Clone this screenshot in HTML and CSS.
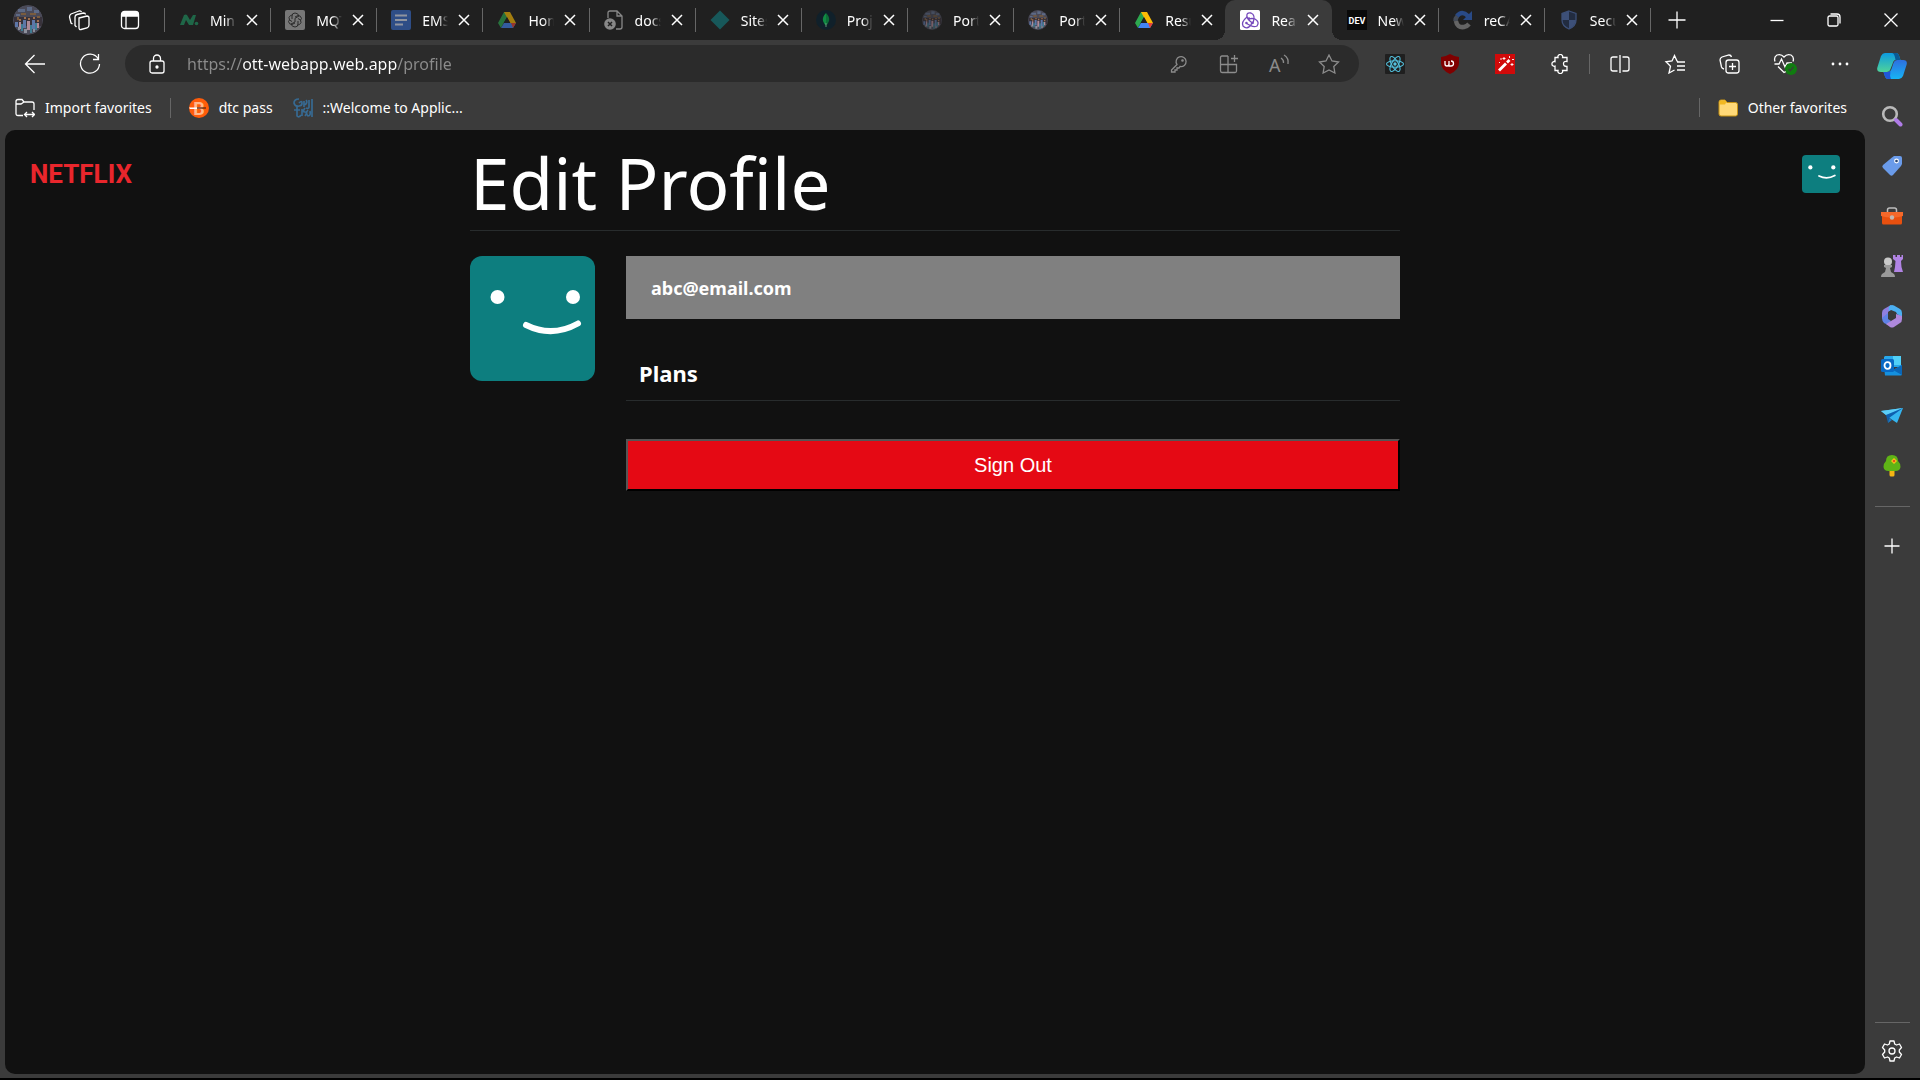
FILE: index.html
```html
<!DOCTYPE html>
<html lang="en">
<head>
  <meta charset="UTF-8">
  <meta name="viewport" content="width=device-width, initial-scale=1.0">
  <title>Edit Profile</title>
  <link rel="stylesheet" href="styles.css">
</head>
<body>
  <!-- Shared icons -->
  <svg class="sprite" aria-hidden="true">
    <symbol id="x" viewBox="0 0 12 12"><path d="M1 1l10 10M11 1L1 11" fill="none" stroke="#fff" stroke-width="1.500"/></symbol>
    <symbol id="drive" viewBox="0 0 20 20">
      <path fill="#2da84f" d="M7 2h6L5 16l-1 2-3-5z"/>
      <path fill="#fbbc05" d="M7 2h6l6 11h-6z"/>
      <path fill="#4285f4" d="M4 18l3-5h12l-3 5z"/>
      <path fill="#ea4335" d="M14 13h5l-3 5z"/>
      <path fill="#202020" d="M10 7l3.400 6H6.600z"/>
    </symbol>
    <symbol id="crowd" viewBox="0 0 30 30">
      <circle cx="15" cy="15" r="15" fill="#4a4a58"/>
      <path fill="#38323a" d="M1 12h28v9H1z"/>
      <path fill="#5d6a86" d="M5 4h7v3H5zM14 2h5v4h-5zM21 5h5v3h-5zM3 9h4v2H3z"/>
      <path fill="#7a5c3e" d="M8 8h5v2H8zM17 8h6v2h-6zM4 12h2v3H4zM24 11h3v2h-3z"/>
      <path fill="#a0704c" d="M6 14h2v2H6zM11 12h2v2h-2zM15 13h2v2h-2zM20 12h2v2h-2zM24 15h2v2h-2z"/>
      <path fill="#5d77a8" d="M2 17h3v5H2zM10 15h3v8h-3zM19 15h3v9h-3z"/>
      <path fill="#b08a98" d="M6 17h2v7H6zM14 16h3v9h-3zM24 18h2v5h-2z"/>
      <path fill="#3f7c92" d="M8 19h2v7H8zM17 20h2v8h-2zM22 18h2v7h-2z"/>
      <path fill="#8c8f9b" d="M11 24h3v4h-3zM5 22h2v3H5zM20 24h2v3h-2z"/>
    </symbol>
    <symbol id="face" viewBox="0 0 125 125">
      <path fill="#0d7e7f" d="M0 0h125v125H0z"/>
      <circle cx="27.500" cy="41" r="7" fill="#fff"/>
      <circle cx="103" cy="41" r="7" fill="#fff"/>
      <path d="M56 69q26 13 52-1.500" fill="none" stroke="#fff" stroke-width="6" stroke-linecap="round"/>
    </symbol>
  </svg>

  <!-- Tab strip -->
  <header class="titlebar">
    <div class="titlebar-start">
      <button class="icon-btn profile" type="button" aria-label="Profile"><svg width="30" height="30"><use href="#crowd"/></svg></button>
      <button class="icon-btn" type="button" aria-label="Workspaces">
        <svg class="line" width="22" height="22" viewBox="0 0 22 22"><path d="M11 9l8-2q2 0 2 2v7q0 2-2 3l-6 1.500q-2 .5-2-2z"/><path d="M8.500 18L7 16.500V8q0-2 2-2.500L15.500 4q2 0 2 1.500M4.500 15L3 14l-1.500-6q0-2 1.500-3l8-3q2-.5 2.500 1"/></svg>
      </button>
      <button class="icon-btn" type="button" aria-label="Tab actions">
        <svg class="line" width="20" height="20" viewBox="0 0 20 20"><rect x="1.500" y="1.500" width="17" height="17" rx="3"/><path d="M6 6v12"/><path d="M2 4q0-2 2-2h12q2 0 2 2v2H2z" fill="#fff"/></svg>
      </button>
    </div>
    <nav class="tabs" aria-label="Tabs">
      <div class="tab">
        <svg width="20" height="20" viewBox="0 0 20 20"><path d="M1 15L5 5q2-1 3 0l3 5 3-5h3l-3 10h-4L7 10l-2 5z" fill="#1f6748"/><circle cx="17.500" cy="13.500" r="1.800" fill="#1f6748"/></svg>
        <a href="#">Mini</a><button type="button" aria-label="Close Min"><svg width="12" height="12"><use href="#x"/></svg></button>
      </div>
      <div class="tab">
        <svg width="20" height="20" viewBox="0 0 20 20"><rect width="20" height="20" rx="2" fill="#777"/><g fill="none" stroke="#2b2b2b"><path d="M7 9V6q0-3 3-3t4 3l-4 2.300v3.700M7 11.500L4.500 10Q3 7 5.500 5.500L7 5M10 13l-3 1.500q-3 0-3.500-3l1-1.500M13 11v3q0 3-3 3t-4-3l4-2M13 8.500l2.500 1.500q1.500 3-1 4.500l-1.500.5M10 7l3-1.500q3 0 3.500 3l-1 1.500"/></g></svg>
        <a href="#">MQT</a><button type="button" aria-label="Close MQ"><svg width="12" height="12"><use href="#x"/></svg></button>
      </div>
      <div class="tab">
        <svg width="20" height="20" viewBox="0 0 20 20"><rect width="20" height="20" rx="2" fill="#2e4d86"/><path d="M4 5.500h12M4 10h12M4 14.500h8" stroke="#8f949f" stroke-width="2"/></svg>
        <a href="#">EMS</a><button type="button" aria-label="Close EMS"><svg width="12" height="12"><use href="#x"/></svg></button>
      </div>
      <div class="tab dim">
        <svg width="20" height="20"><use href="#drive"/></svg>
        <a href="#">Home</a><button type="button" aria-label="Close Home"><svg width="12" height="12"><use href="#x"/></svg></button>
      </div>
      <div class="tab">
        <svg width="20" height="20" viewBox="0 0 20 20"><path d="M4 8V3q0-2 2-2h7l5 5v11q0 2-2 2h-4M13 1v5h5" fill="none" stroke="#888" stroke-width="1.300"/><circle cx="6" cy="14" r="5.800" fill="#888"/><path d="M4 12l4 4M8 12l-4 4" stroke="#202020" stroke-width="1.500"/></svg>
        <a href="#">docs</a><button type="button" aria-label="Close docs"><svg width="12" height="12"><use href="#x"/></svg></button>
      </div>
      <div class="tab">
        <svg width="20" height="20" viewBox="0 0 20 20"><path d="M10 .5l9.500 9.500-9.500 9.500L.5 10z" fill="#17585a"/></svg>
        <a href="#">Sites</a><button type="button" aria-label="Close Sites"><svg width="12" height="12"><use href="#x"/></svg></button>
      </div>
      <div class="tab">
        <svg width="20" height="20" viewBox="0 0 20 20"><circle cx="10" cy="10" r="10" fill="#10202a"/><path d="M10 3q-4 4-3 8 1 3 3 4.500z" fill="#118a43"/><path d="M10 3q4 4 3 8-1 3-3 4.500z" fill="#0d6e38"/><path d="M10 13v4" stroke="#7a8" stroke-width=".8"/></svg>
        <a href="#">Proje</a><button type="button" aria-label="Close Project"><svg width="12" height="12"><use href="#x"/></svg></button>
      </div>
      <div class="tab dim">
        <svg width="20" height="20"><use href="#crowd"/></svg>
        <a href="#">Portf</a><button type="button" aria-label="Close Port"><svg width="12" height="12"><use href="#x"/></svg></button>
      </div>
      <div class="tab">
        <svg width="20" height="20"><use href="#crowd"/></svg>
        <a href="#">Portf</a><button type="button" aria-label="Close Port"><svg width="12" height="12"><use href="#x"/></svg></button>
      </div>
      <div class="tab">
        <svg width="20" height="20"><use href="#drive"/></svg>
        <a href="#">Resu</a><button type="button" aria-label="Close Resume"><svg width="12" height="12"><use href="#x"/></svg></button>
      </div>
      <div class="tab active">
        <svg width="20" height="20" viewBox="0 0 20 20"><rect width="20" height="20" rx="1.500" fill="#fff"/><g fill="none" stroke="#764abc" stroke-width="1.300" stroke-linecap="round"><path d="M13 13q3-8-2-10-5-1-4 4 1 3 4 5"/><path d="M7 7q-6 5-4 9 4 4 8-1l1-3" /><path d="M6 13q7 5 11 3 3-4-2-7-3-1-6 0"/></g><g fill="#764abc"><circle cx="12.500" cy="13" r="1.200"/><circle cx="9" cy="8.500" r="1.200"/><circle cx="6.500" cy="13" r="1.200"/></g></svg>
        <a href="#">Reac</a><button type="button" aria-label="Close React"><svg width="12" height="12"><use href="#x"/></svg></button>
      </div>
      <div class="tab after-active">
        <svg width="20" height="20" viewBox="0 0 20 20"><path d="M0 0h20v20H0z" fill="#090909"/><text x="10" y="14" class="dev">DEV</text></svg>
        <a href="#">New</a><button type="button" aria-label="Close New"><svg width="12" height="12"><use href="#x"/></svg></button>
      </div>
      <div class="tab">
        <svg width="20" height="20" viewBox="0 0 20 20"><g fill="none" stroke-width="4.500"><path d="M2.500 11a7 7 0 0 1 2-5" stroke="#444b57"/><path d="M4 6q5-6 11 0" stroke="#294a86"/><path d="M3 11q1 7 8 6 3-.5 5-3" stroke="#656565"/></g><path d="M19 1v9h-9z" fill="#294a86"/></svg>
        <a href="#">reCA</a><button type="button" aria-label="Close reCAPTCHA"><svg width="12" height="12"><use href="#x"/></svg></button>
      </div>
      <div class="tab">
        <svg width="20" height="20" viewBox="0 0 20 20"><path d="M10 1l7 2.500V10q0 6-7 9-7-3-7-9V3.500z" fill="#222c40" stroke="#3d5078" stroke-width="1.300"/><path d="M10 1v9H3V3.500zM10 10h7q-1 6-7 9z" fill="#3d5078"/></svg>
        <a href="#">Secu</a><button type="button" aria-label="Close Security"><svg width="12" height="12"><use href="#x"/></svg></button>
      </div>
    </nav>
    <div class="titlebar-end">
      <button class="icon-btn" type="button" aria-label="New tab"><svg class="line" width="18" height="18" viewBox="0 0 18 18"><path d="M9 .5v17M.5 9h17"/></svg></button>
      <div class="window-controls">
        <button class="icon-btn" type="button" aria-label="Minimize"><svg class="line" width="14" height="14" viewBox="0 0 14 14"><path d="M.5 7.500h13"/></svg></button>
        <button class="icon-btn" type="button" aria-label="Restore"><svg class="line" width="14" height="14" viewBox="0 0 14 14"><rect x="1" y="3" width="10" height="10" rx="1.500"/><path d="M3.500 1H10q3 0 3 3v6.500"/></svg></button>
        <button class="icon-btn" type="button" aria-label="Close"><svg class="line" width="14" height="14" viewBox="0 0 14 14"><path d="M.5.5l13 13M13.500.5l-13 13"/></svg></button>
      </div>
    </div>
  </header>

  <div class="browser">
    <div class="left">
      <!-- Address bar -->
      <div class="toolbar">
        <button class="tool" type="button" aria-label="Back"><svg class="line" width="22" height="20" viewBox="0 0 22 20"><path d="M10.500 1L1.500 10l9 9M1.500 10H21"/></svg></button>
        <button class="tool" type="button" aria-label="Refresh"><svg class="line" width="22" height="22" viewBox="0 0 22 22"><path d="M19 5.500A9.500 9.500 0 1 0 20.500 11M19.500 1v5.500H14"/></svg></button>
        <form class="address">
          <svg class="line" width="18" height="20" viewBox="0 0 18 20"><rect x="2" y="7" width="14" height="12" rx="2"/><path d="M5.500 7V4.500a3.500 3.500 0 0 1 7 0V7"/><circle cx="9" cy="13" r="1" fill="#fff"/></svg>
          <input type="text" aria-label="Address" value="https://ott-webapp.web.app/profile">
          <button type="button" aria-label="Passwords"><svg class="line gray" width="18" height="18" viewBox="0 0 18 18"><path d="M7 9.500L1.500 15v2H5v-2h2v-2h2l1-1.500a5 5 0 1 0-3-2z"/><circle cx="12.500" cy="5.500" r=".7"/></svg></button>
          <button type="button" aria-label="Apps"><svg class="line gray" width="20" height="20" viewBox="0 0 20 20"><path d="M9 2H3q-1.500 0-1.500 1.500v13Q1.500 18.500 3 18.500h13q1.500 0 1.500-1.500v-6.500h-16M9 2v16.500M15.500 1v7M12 4.500h7"/></svg></button>
          <button type="button" aria-label="Read aloud"><svg class="line gray" width="22" height="20" viewBox="0 0 22 20"><path d="M13 4q3 2 2.500 5M16 1q5 3 4 9"/><text x="1" y="18" class="read">A</text></svg></button>
          <button type="button" aria-label="Add to favorites"><svg class="line gray" width="22" height="20" viewBox="0 0 22 20"><path d="M11 1l3 6 6.500 1-4.700 4.600 1.100 6.400L11 16l-5.900 3 1.100-6.400L1.500 8 8 7z"/></svg></button>
        </form>
        <button class="tool" type="button" aria-label="React tools"><svg width="20" height="20" viewBox="0 0 20 20"><rect width="20" height="20" rx="1" fill="#1f1f1f"/><g fill="none" stroke="#53c1de" stroke-width="1.100"><ellipse cx="10" cy="10" rx="8.500" ry="3.300"/><ellipse cx="10" cy="10" rx="8.500" ry="3.300" transform="rotate(60 10 10)"/><ellipse cx="10" cy="10" rx="8.500" ry="3.300" transform="rotate(120 10 10)"/></g><circle cx="10" cy="10" r="1.700" fill="#53c1de"/></svg></button>
        <button class="tool" type="button" aria-label="Ad blocker"><svg width="20" height="20" viewBox="0 0 20 20"><path d="M10 0q4 2.500 9 3v6q0 7-9 11Q1 16 1 9V3q5-.5 9-3z" fill="#800000"/><path d="M5 7v3q0 2 2 2t2-2V7v5h2a2.500 2.500 0 1 0 0-5" fill="none" stroke="#fff" stroke-width="1.300"/></svg></button>
        <button class="tool" type="button" aria-label="Magic wand"><svg width="20" height="20" viewBox="0 0 20 20"><path d="M0 0h20v20H0z" fill="#d10a0a"/><path d="M4 16.500l7-7" stroke="#fff" stroke-width="2.800"/><path d="M12 8.500l2.500-2.500" stroke="#fff" stroke-width="2.600"/><path d="M9 3v3M7.500 4.500h3M17 9v3M15.500 10.500h3M14.500 2v2M5 5h2M17 5.500h2M4 8.500h1" stroke="#fff" stroke-width=".9"/></svg></button>
        <button class="tool" type="button" aria-label="Extensions"><svg class="line" width="20" height="20" viewBox="0 0 20 20"><path d="M5 3.500h3a2.400 2.400 0 1 1 4.600 0H17V7.500q-3.500-.5-3.500 2.300t3.500 2.700V16.500h-4.400a2.400 2.400 0 1 1-4.600 0H5v-4.300a2.400 2.400 0 1 1 0-4.600z"/></svg></button>
        <span class="bar"></span>
        <button class="tool" type="button" aria-label="Split screen"><svg class="line" width="20" height="20" viewBox="0 0 20 20"><path d="M10 1v18M7.500 3H3Q1 3 1 5v10q0 2 2 2h4.500M12.500 3H17q2 0 2 2v10q0 2-2 2h-4.500"/></svg></button>
        <button class="tool" type="button" aria-label="Favorites"><svg class="line" width="22" height="20" viewBox="0 0 22 20"><path d="M14 7.500l-1-.5-2.500-5.500L8 7l-6 .8 4.500 4.400L5 19l5.500-3M13 8h8M13 12h8M13 16h8"/></svg></button>
        <button class="tool" type="button" aria-label="Collections"><svg class="line" width="22" height="20" viewBox="0 0 22 20"><rect x="7" y="6" width="13" height="13" rx="2.500"/><path d="M13.500 9v7M10 12.500h7M5 15q-2-.5-2.500-2L1 6q0-2 2-3l7-2q2 0 2.500 2"/></svg></button>
        <button class="tool" type="button" aria-label="Browser essentials"><svg class="line" width="24" height="22" viewBox="0 0 24 22"><path d="M2 8.500Q.5 4 4 2q4-1.500 7 2 3-3.500 7-2 3.500 2 2 6.500M1.500 11H6l2.500-5 3.500 8 2-4h5M5 13.500l6 6 2-1"/><circle cx="18" cy="16" r="6" fill="#107c10" stroke="none"/><path d="M15.500 16l1.700 1.800 3.300-4" stroke="#3b3b3b"/></svg></button>
        <button class="tool" type="button" aria-label="Settings and more"><svg width="18" height="4" viewBox="0 0 18 4" fill="#fff"><circle cx="2" cy="2" r="1.400"/><circle cx="9" cy="2" r="1.400"/><circle cx="16" cy="2" r="1.400"/></svg></button>
      </div>

      <!-- Favorites bar -->
      <nav class="favorites" aria-label="Favorites">
        <a href="#"><svg class="line" width="20" height="20" viewBox="0 0 20 20"><path d="M8 17.500H3q-2 0-2-2v-12Q1 1.500 3 1.500h4l2 2.500h8q2 0 2 2V12M1 6h5l3-2M10 16.500h9M12 14l-2.500 2.500L12 19M17 14l2.500 2.500L17 19"/></svg>Import favorites</a>
        <span class="bar"></span>
        <a href="#"><svg width="20" height="20" viewBox="0 0 20 20"><circle cx="10" cy="10" r="10" fill="#ff5c0a"/><text x="10" y="17" class="dtc">B</text><path d="M0 9.500h8v1.500H1z" fill="#fff"/><path d="M8 10h9" stroke="#5a2a18" stroke-width="1.300"/></svg>dtc pass</a>
        <a href="#"><svg width="20" height="20" viewBox="0 0 20 20" fill="none" stroke="#376a92" stroke-width="1.700"><path d="M6 1Q1 1 1 5q1 4 5 3M6 5q3-3 3 0t-3 3M11 3v6M12 7q3-3 1-5M16 2v7q0 2-3 1M19 1v8M1 12h6M4 9v9q2 2 4-1M9 11v7M12 10q-3 4 0 4 3 0 0 4M15 12q-3 3 0 6 3 0 2-5M19 9v10"/></svg>::Welcome to Applic...</a>
        <a class="other" href="#"><svg width="20" height="18" viewBox="0 0 20 18"><path d="M1 3q0-2 2-2h4l2 2.500h8.500q2 0 2 2V15q0 2-2 2H3q-2 0-2-2z" fill="#ffd978" stroke="#c69212"/><path d="M1.500 5.500V3q0-1.500 1.500-1.500h4L8.500 3 7 5.500z" fill="#f2b821"/></svg>Other favorites</a>
      </nav>

      <!-- Profile page -->
      <main class="page">
        <div class="nav">
          <a class="logo" href="#">NETFLIX</a>
          <a href="#" aria-label="Profile"><svg class="nav-avatar" width="38" height="38"><use href="#face"/></svg></a>
        </div>
        <div class="profile-body">
          <h1>Edit Profile</h1>
          <div class="profile-info">
            <svg class="avatar" width="125" height="125"><use href="#face"/></svg>
            <div class="details">
              <h2>abc@email.com</h2>
              <h3>Plans</h3>
              <button class="sign-out" type="button">Sign Out</button>
            </div>
          </div>
        </div>
      </main>
    </div>

    <!-- Sidebar -->
    <aside class="sidebar">
      <button type="button" aria-label="Copilot"><svg width="30" height="28" viewBox="0 0 30 28">
        <defs>
          <linearGradient id="cp1" x2="0" y2="1"><stop stop-color="#0c9be0"/><stop offset="1" stop-color="#4fd39a"/></linearGradient>
          <linearGradient id="cp2" x2="0" y2="1"><stop stop-color="#2e6fe0"/><stop offset="1" stop-color="#16b4f5"/></linearGradient>
        </defs>
        <path d="M8 1h11q2.500 0 3.500 4l1 3h-5q-2 0-3 4l-2 5q-1 3-4 3H4q-5 0-3.500-5L4 4q1.500-3 4-3z" fill="url(#cp1)"/><path d="M15 1h4q2.500 0 3.500 4l1 3h-5q-1-7-3.500-7z" fill="#0a5a94"/>
        <path d="M22 27H11q-2.500 0-3.500-4l-1-3h4q3 0 4-3l2-6q1-3 4-3H26q5 0 3.500 5L26 24q-1.500 3-4 3z" fill="url(#cp2)"/><path d="M14 27h-3q-2.500 0-3.500-4l-1-3h4q2 0 3-1-1 5 .5 8z" fill="#2058d8"/>
      </svg></button>
      <button type="button" aria-label="Search"><svg width="22" height="22" viewBox="0 0 22 22" fill="none"><circle cx="9" cy="9" r="6.800" stroke="#b9b9b9" stroke-width="2.600"/><path d="M15 15l4.500 4.500" stroke="#b07ce8" stroke-width="4" stroke-linecap="round"/></svg></button>
      <button type="button" aria-label="Shopping"><svg width="22" height="22" viewBox="0 0 22 22"><path d="M11 2.500L13 1h6q2 0 2 2v6l-1 2-8 9q-1.500 1.500-3 0l-7-7q-1.500-1.500 0-3z" fill="#6a9bea"/><circle cx="15.500" cy="6" r="2.400" fill="#fff"/><circle cx="15.500" cy="6" r="1.300" fill="#26426f"/></svg></button>
      <button type="button" aria-label="Tools"><svg width="22" height="18" viewBox="0 0 22 18"><path d="M6.500 5V3q0-2 2-2h5q2 0 2 2v2" fill="none" stroke="#bdbdbd" stroke-width="1.500"/><path d="M1 9h20v7q0 1.500-1.500 1.500h-17Q1 17.500 1 16z" fill="#e8500f"/><path d="M0 5h22v4q-5 1.500-11 1.500T0 9z" fill="#f4682a"/><circle cx="11" cy="10.500" r="2.200" fill="#c2b8b2"/></svg></button>
      <button type="button" aria-label="Games"><svg width="22" height="24" viewBox="0 0 22 24"><path d="M12 1h2.500v2H16V1h3v2h1.500V1H22v4l-2 2 .5 6L22 18h-9l1-5 .5-6-2.500-2z" fill="#b184e4"/><circle cx="7" cy="7.500" r="4" fill="#c8c8c8"/><path d="M3 11h8v2l-2 1 1 4 3 2q1 1 1 3H0q0-2 1-3l3-2 1-4-2-1z" fill="#999"/></svg></button>
      <button type="button" aria-label="Microsoft 365"><svg width="22" height="24" viewBox="0 0 22 24"><path d="M10 1L3 5Q1 6 1 9v6l6-3V8l4-3z" fill="#8f7fe0"/><path d="M9 1.500q2-1 4 0l6 3.500q2 1 2 4v4l-5-3-1-2-5-2-2 1q-1-4 1-5.500z" fill="#4bb0f2"/><path d="M1 14l6-5v6l3 2-3 4-4-2q-2-2-2-5z" fill="#5f82e6"/><path d="M21 12v3q0 3-2 4l-6 4q-2 1-4 0l-4-3 5-3 5-3v-4z" fill="#ae88dc"/></svg></button>
      <button type="button" aria-label="Outlook"><svg width="22" height="22" viewBox="0 0 22 22"><path d="M4 1h15q1 0 1 1v10H3V2z" fill="#28a8ea"/><path d="M12 1h8v9h-8z" fill="#50d0f8"/><path d="M3 12l9 3 9-5v9q0 1.500-1.500 1.500H4z" fill="#1490df"/><path d="M12 15l9 5V10z" fill="#0a66b7"/><rect x="0" y="4" width="13" height="13" rx="1.500" fill="#0869c4"/><ellipse cx="6.500" cy="10.500" rx="3" ry="3.300" fill="none" stroke="#fff" stroke-width="1.800"/></svg></button>
      <button type="button" aria-label="Drop"><svg width="22" height="18" viewBox="0 0 22 18"><path d="M0 4l22-3-6 15-6-4z" fill="#35b5ef"/><path d="M0 4l22-3L5 8z" fill="#5ccef8"/><path d="M5 8l17-7L8 11l-1 5z" fill="#0e5fae"/><path d="M7 16l1-5 3 2z" fill="#1679c7"/></svg></button>
      <button type="button" aria-label="E-tree"><svg width="20" height="24" viewBox="0 0 20 24"><path d="M7.500 15h5v6q0 1.500-1.500 1.500H9q-1.500 0-1.500-1.500z" fill="#f5b514"/><path d="M10 1q6 0 6 6 3 3 2.500 6-.5 4-5 4h-7q-4.500 0-5-4Q1 10 4 7q0-6 6-6z" fill="#5fb416"/><path d="M12 4l3 3-3 3-3-3z" fill="#ffc61a"/><circle cx="12" cy="7" r="1.300" fill="#e8541a"/></svg></button>
      <hr>
      <button type="button" aria-label="Customize"><svg class="line" width="16" height="16" viewBox="0 0 16 16"><path d="M8 .5v15M.5 8h15"/></svg></button>
      <div class="sidebar-bottom">
        <hr>
        <button type="button" aria-label="Settings"><svg class="line" width="22" height="22" viewBox="0 0 22 22"><path d="M9 1h4l.7 3 1.800 1 3-1 2 3.500L18.300 10v2l2.200 2.500-2 3.500-3-1-1.800 1-.7 3H9l-.7-3-1.800-1-3 1-2-3.500L3.700 12v-2L1.500 7.500l2-3.500 3 1 1.800-1z" stroke-linejoin="round"/><circle cx="11" cy="11" r="3"/></svg></button>
      </div>
    </aside>
  </div>
</body>
</html>
```
FILE: styles.css
```css
* {
  box-sizing: border-box;
}

body {
  margin: 0;
  min-height: 100vh;
  display: flex;
  flex-direction: column;
  border-bottom: 2px solid #000;
  background-color: #3b3b3b;
  color: #fff;
  font-family: "Noto Sans", "Open Sans", sans-serif;
  font-size: 14px;
}

a {
  color: inherit;
  text-decoration: none;
}

button {
  padding: 0;
  border: 0;
  background: none;
  color: inherit;
  display: flex;
  align-items: center;
  justify-content: center;
}

svg {
  flex-shrink: 0;
}

.sprite {
  position: absolute;
  width: 0;
  height: 0;
}

.line {
  fill: none;
  stroke: #fff;
  stroke-width: 1.3;
}

.gray {
  stroke: #8c8c8c;
}

.bar {
  width: 1px;
  height: 20px;
  background-color: #666;
}

/* Tab strip */
.titlebar {
  display: flex;
  height: 40px;
  background-color: #202020;
}

.titlebar-start {
  display: flex;
  width: 164px;
  padding-left: 2px;
}

.icon-btn {
  width: 51px;
  height: 40px;
}

.profile svg {
  border-radius: 50%;
}

.tabs {
  display: flex;
  flex: 1;
  min-width: 0;
}

.tab {
  position: relative;
  flex: 1;
  min-width: 0;
  display: flex;
  align-items: center;
}

.tab::before {
  content: "";
  width: 1px;
  height: 24px;
  margin-right: 14px;
  background-color: #666;
}

.tab a {
  width: 26px;
  margin: 0 10px 0 11px;
  overflow: hidden;
  white-space: nowrap;
  -webkit-mask-image: linear-gradient(90deg, #000 60%, transparent);
  mask-image: linear-gradient(90deg, #000 60%, transparent);
}

.dim > svg {
  opacity: 0.6;
}

.active {
  z-index: 1;
  border-radius: 10px 10px 0 0;
  background-color: #3b3b3b;
}

.active::before,
.after-active::before {
  background: none;
}

.active::after {
  content: "";
  position: absolute;
  left: -10px;
  right: -10px;
  bottom: 0;
  height: 10px;
  background:
    radial-gradient(circle at 0 0, transparent 10px, #3b3b3b 10px) left / 10px 10px no-repeat,
    radial-gradient(circle at 100% 0, transparent 10px, #3b3b3b 10px) right / 10px 10px no-repeat;
}

.dev {
  fill: #fff;
  font: bold 9px "Roboto", sans-serif;
  text-anchor: middle;
}

.titlebar-end {
  display: flex;
  align-items: center;
  width: 270px;
  padding-right: 1px;
}

.titlebar-end::before {
  content: "";
  width: 1px;
  height: 24px;
  background-color: #666;
}

.window-controls {
  display: flex;
  margin-left: auto;
}

.window-controls .icon-btn {
  width: 57px;
}

/* Toolbar */
.browser {
  display: flex;
  flex: 1;
}

.left {
  display: flex;
  flex-direction: column;
  flex: 1;
  min-width: 0;
}

.toolbar {
  display: flex;
  align-items: center;
  height: 47px;
  margin-right: -2px;
  padding-left: 7px;
}

.tool {
  width: 55px;
  height: 37px;
}

.toolbar .bar {
  margin: 0 2px;
}

.address {
  display: flex;
  align-items: center;
  flex: 1;
  height: 37px;
  margin: 0 8px;
  padding: 0 5px 0 23px;
  border-radius: 19px;
  background-color: #2b2b2b;
}

.address input {
  flex: 1;
  min-width: 0;
  margin-left: 21px;
  padding: 0;
  border: 0;
  outline: 0;
  background: linear-gradient(90deg, #8c8c8c 56px, #fff 56px, #fff 210px, #8c8c8c 210px);
  -webkit-background-clip: text;
  background-clip: text;
  color: transparent;
  font-family: inherit;
  font-size: 16px;
}

.address button {
  width: 50px;
  height: 37px;
}

.read {
  fill: #8c8c8c;
  stroke: none;
  font: 18px "Noto Sans", sans-serif;
}

/* Favorites bar */
.favorites {
  display: flex;
  align-items: center;
  height: 43px;
  padding: 0 18px 2px 15px;
}

.favorites a {
  display: flex;
  align-items: center;
  gap: 10px;
}

.favorites .bar {
  margin: 0 18px;
}

.favorites a + a {
  margin-left: 20px;
}

.favorites .other {
  margin-left: auto;
  padding-left: 18px;
  border-left: 1px solid #666;
}

.dtc {
  fill: #ffb78c;
  font: bold 18px "Roboto", sans-serif;
  text-anchor: middle;
}

/* Profile page */
.page {
  flex: 1;
  margin: 0 0 4px 5px;
  border-radius: 10px;
  background-color: #111;
}

.nav {
  display: flex;
  justify-content: space-between;
  height: 0;
  padding: 25px 25px 0;
}

.logo {
  height: 38px;
  color: #e9262c;
  font: bold 26px/38px "Liberation Sans Narrow", "Roboto", sans-serif;
}

.nav-avatar {
  border-radius: 4px;
}

.profile-body {
  width: 50%;
  margin: 0 auto;
}

h1 {
  margin: -4px 0 25px;
  padding-bottom: 15px;
  border-bottom: 1px solid #282c2d;
  font-size: 71px;
  font-weight: 400;
  line-height: 64px;
}

.profile-info {
  display: flex;
  gap: 31px;
}

.avatar {
  border-radius: 12px;
}

.details {
  flex: 1;
}

h2 {
  margin: 0;
  padding: 20px 25px 18px;
  background-color: #808080;
  font-size: 18px;
  line-height: 25px;
}

h3 {
  margin: 38px 0;
  padding: 0 13px 11px;
  border-bottom: 1px solid #282c2d;
  font-size: 22px;
  line-height: 32px;
}

.sign-out {
  width: 100%;
  height: 52px;
  border: 2px solid;
  border-color: #555 #000 #000 #555;
  background-color: #e50914;
  font-family: "Liberation Sans", Arial, sans-serif;
  font-size: 20px;
}

/* Sidebar */
.sidebar {
  display: flex;
  flex-direction: column;
  width: 55px;
  padding: 1px 1px 0 0;
}

.sidebar button {
  width: 100%;
  height: 50px;
}

hr {
  width: 35px;
  height: 1px;
  margin: 15px auto 14px;
  border: 0;
  background-color: #666;
}

.sidebar-bottom {
  margin-top: auto;
}

.sidebar-bottom hr {
  margin: 0 auto 3px;
}

.sidebar-bottom button {
  margin-bottom: 2px;
}
```
